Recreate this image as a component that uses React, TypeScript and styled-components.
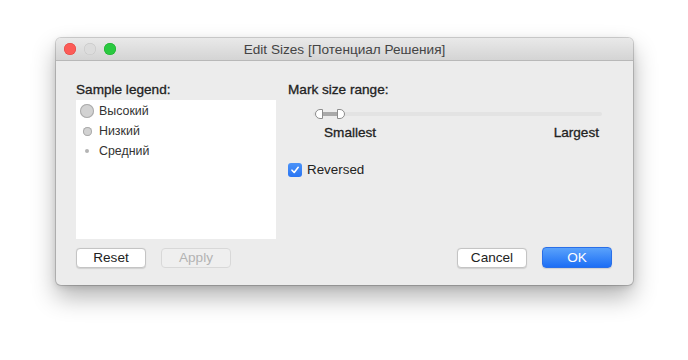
import React from "react";
import styled, { createGlobalStyle } from "styled-components";

const Global = createGlobalStyle`
  html, body { margin: 0; padding: 0; background: #ffffff; }
  body { font-family: "Liberation Sans", Arial, sans-serif; -webkit-font-smoothing: antialiased; }
`;

const Page = styled.div`
  width: 688px;
  height: 360px;
  padding: 38px 0 0 56px;
  box-sizing: border-box;
  display: flex;
  align-items: flex-start;
`;

const Window = styled.div`
  width: 577px;
  height: 247px;
  display: flex;
  flex-direction: column;
  background: #ececec;
  border-radius: 5px;
  box-shadow: 0 0 0 1px rgba(0, 0, 0, 0.16), 0 12px 24px rgba(0, 0, 0, 0.3), 0 2px 6px rgba(0, 0, 0, 0.12);
  overflow: hidden;
`;

const TitleBar = styled.div`
  height: 22px;
  flex: none;
  display: grid;
  grid-template-columns: 1fr auto 1fr;
  align-items: center;
  padding: 0 8px;
  background: linear-gradient(#e9e9e9, #d4d4d4);
  border-bottom: 1px solid #b8b8b8;
`;

const Lights = styled.div`
  display: flex;
  gap: 8px;
  align-items: center;
`;

const Light = styled.span<{ $c: string; $b: string }>`
  width: 12px;
  height: 12px;
  border-radius: 50%;
  background: ${(p) => p.$c};
  box-shadow: inset 0 0 0 0.5px ${(p) => p.$b};
`;

const Title = styled.div`
  font-size: 13.6px;
  color: #444;
  white-space: nowrap;
`;

const Body = styled.div`
  flex: 1;
  display: flex;
  flex-direction: column;
  padding: 19px 21px 18px 20px;
`;

const Main = styled.div`
  display: flex;
  gap: 12px;
`;

const LeftCol = styled.div`
  width: 200px;
  display: flex;
  flex-direction: column;
`;

const RightCol = styled.div`
  flex: 1;
  display: flex;
  flex-direction: column;
`;

const Label = styled.div`
  font-size: 13.6px;
  color: #222;
  height: 20px;
  line-height: 20px;
  -webkit-text-stroke: 0.3px #222;
`;

const LegendBox = styled.div`
  height: 139px;
  background: #ffffff;
  padding-top: 1px;
  box-sizing: border-box;
`;

const LegendRow = styled.div`
  height: 20px;
  display: flex;
  align-items: center;
`;

const Swatch = styled.div`
  width: 23px;
  display: flex;
  justify-content: center;
  padding-right: 1px;
  box-sizing: border-box;
`;

const Dot = styled.span<{ $d: number }>`
  width: ${(p) => p.$d}px;
  height: ${(p) => p.$d}px;
  border-radius: 50%;
  background: #d2d2d2;
  box-shadow: ${(p) => (p.$d > 5 ? "inset 0 0 0 1px #ababab" : "none")};
  ${(p) => (p.$d <= 5 ? "background: #b4b4b4;" : "")}
`;

const LegendText = styled.span`
  font-size: 12.4px;
  color: #333;
`;

const SliderArea = styled.div`
  margin-top: 6px;
  padding-left: 25px;
  padding-right: 10px;
  display: flex;
  flex-direction: column;
`;

const Track = styled.div`
  height: 16px;
  display: flex;
  align-items: center;
`;

const TrackLine = styled.div`
  flex: 1;
  height: 4px;
  border-radius: 2px;
  background: #e3e3e3;
  display: flex;
  align-items: center;
  padding-left: 2px;
`;

const Thumb = styled.span<{ $side: "l" | "r" }>`
  width: 8px;
  height: 10px;
  box-sizing: border-box;
  background: #ffffff;
  border: 1px solid #8d8d8d;
  border-radius: ${(p) => (p.$side === "l" ? "5px 0 0 5px" : "0 5px 5px 0")};
  flex: none;
`;

const Range = styled.span`
  width: 14px;
  height: 4px;
  background: #a9a9a9;
  flex: none;
`;

const Ends = styled.div`
  display: flex;
  justify-content: space-between;
  margin-top: 3px;
  padding-left: 11px;
  padding-right: 3px;
`;

const EndLabel = styled.span`
  font-size: 13.6px;
  color: #222;
  -webkit-text-stroke: 0.3px #222;
`;

const CheckRow = styled.label`
  margin-top: 22px;
  display: flex;
  align-items: center;
  gap: 5px;
  font-size: 13.4px;
  color: #222;
`;

const Box = styled.span`
  width: 14px;
  height: 14px;
  border-radius: 3px;
  background: linear-gradient(#4b93f8, #2a75f3);
  display: flex;
  align-items: center;
  justify-content: center;
`;

const Footer = styled.div`
  margin-top: 8px;
  display: flex;
  align-items: center;
`;

const Group = styled.div`
  display: flex;
  gap: 15px;
  align-items: center;
`;

const Spacer = styled.div`
  flex: 1;
`;

const Button = styled.button<{ $variant?: "default" | "disabled" | "primary" }>`
  width: 70px;
  height: ${(p) => (p.$variant === "primary" ? "21px" : "20px")};
  box-sizing: border-box;
  padding: 0;
  font-family: inherit;
  font-size: 13.6px;
  border-radius: 4px;
  border: 1px solid
    ${(p) => (p.$variant === "primary" ? "#2a6fe8" : p.$variant === "disabled" ? "#d8d8d8" : "#c4c4c4")};
  background: ${(p) =>
    p.$variant === "primary"
      ? "linear-gradient(#5aa2fb, #1c6ef5)"
      : p.$variant === "disabled"
      ? "#efefef"
      : "#ffffff"};
  color: ${(p) => (p.$variant === "primary" ? "#ffffff" : p.$variant === "disabled" ? "#b3b3b3" : "#222")};
  box-shadow: ${(p) => (p.$variant === "disabled" ? "none" : "0 0.5px 1px rgba(0,0,0,0.12)")};
`;

export default function App() {
  return (
    <>
      <Global />
      <Page>
        <Window>
          <TitleBar>
            <Lights>
              <Light $c="#fc5b57" $b="#e0443e" />
              <Light $c="#dcdcdc" $b="#c4c4c4" />
              <Light $c="#2ac940" $b="#1aab29" />
            </Lights>
            <Title>Edit Sizes [Потенциал Решения]</Title>
            <div />
          </TitleBar>
          <Body>
            <Main>
              <LeftCol>
                <Label>Sample legend:</Label>
                <LegendBox>
                  <LegendRow>
                    <Swatch>
                      <Dot $d={14} />
                    </Swatch>
                    <LegendText>Высокий</LegendText>
                  </LegendRow>
                  <LegendRow>
                    <Swatch>
                      <Dot $d={9} />
                    </Swatch>
                    <LegendText>Низкий</LegendText>
                  </LegendRow>
                  <LegendRow>
                    <Swatch>
                      <Dot $d={4} />
                    </Swatch>
                    <LegendText>Средний</LegendText>
                  </LegendRow>
                </LegendBox>
              </LeftCol>
              <RightCol>
                <Label>Mark size range:</Label>
                <SliderArea>
                  <Track>
                    <TrackLine>
                      <Thumb $side="l" />
                      <Range />
                      <Thumb $side="r" />
                    </TrackLine>
                  </Track>
                  <Ends>
                    <EndLabel>Smallest</EndLabel>
                    <EndLabel>Largest</EndLabel>
                  </Ends>
                </SliderArea>
                <CheckRow>
                  <Box>
                    <svg width="10" height="10" viewBox="0 0 10 10">
                      <path d="M2 5.2 L4.2 7.5 L8.2 2.3" fill="none" stroke="#fff" strokeWidth="1.6" strokeLinecap="round" strokeLinejoin="round" />
                    </svg>
                  </Box>
                  Reversed
                </CheckRow>
              </RightCol>
            </Main>
            <Footer>
              <Group>
                <Button>Reset</Button>
                <Button $variant="disabled">Apply</Button>
              </Group>
              <Spacer />
              <Group>
                <Button>Cancel</Button>
                <Button $variant="primary">OK</Button>
              </Group>
            </Footer>
          </Body>
        </Window>
      </Page>
    </>
  );
}
